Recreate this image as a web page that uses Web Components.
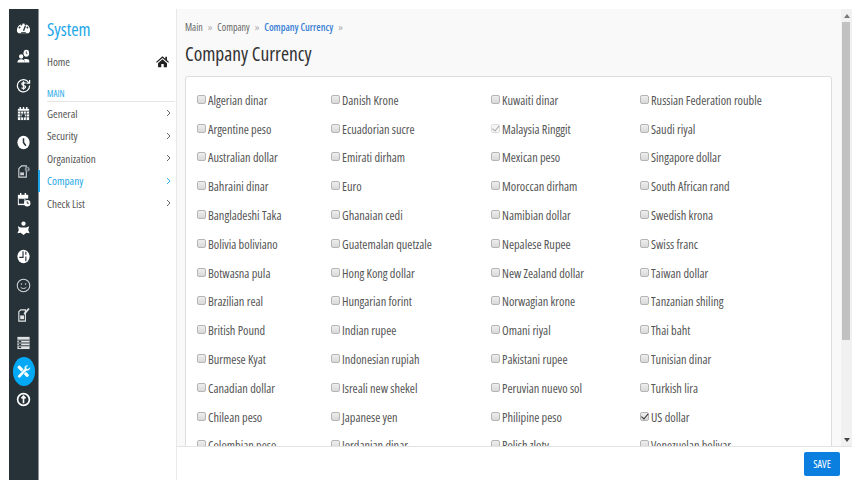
<!DOCTYPE html>
<html><head><meta charset="utf-8">
<style>
html,body{margin:0;padding:0;background:#fff;height:100%;overflow:hidden}
body{font-family:"Open Sans","Noto Sans",sans-serif;font-stretch:75%;color:#444}
</style></head><body>
<app-shell></app-shell>
<script>
const ICONS=[
'<path d="M1.200 12.500A7 7 0 1 1 14.800 12.500l-1.300 1.500h-11z" fill="#fff"/><circle cx="3.800" cy="8" r="1" fill="#263238"/><circle cx="5.800" cy="4.800" r="1" fill="#263238"/><circle cx="10.200" cy="4.800" r="1" fill="#263238"/><circle cx="12.200" cy="8" r="1" fill="#263238"/><path d="M8 11.500L10 6.500" stroke="#263238" stroke-width="1.400"/><path d="M5.500 14v-1h5v1z" fill="#263238"/>',
'<circle cx="5.500" cy="8" r="2.300" fill="#fff"/><path d="M1.500 14.500c0-2.500 1.700-3.500 4-3.500s4 1 4 3.500z" fill="#fff"/><ellipse cx="11" cy="4.500" rx="3" ry="3.700" fill="#fff"/><path d="M11 2.500v2.500h1.300" stroke="#263238" stroke-width=".8" fill="none"/><path d="M9.500 14.500c0-2-1-3-1-3.500 1-.5 4-.8 5 .3.600.8.800 2 .8 3.200z" fill="#fff"/>',
'<path d="M13.600 5A6.500 6.500 0 1 0 14.500 8" fill="none" stroke="#fff" stroke-width="1.300"/><path d="M14.500 2v3.400h-3.400" fill="none" stroke="#fff" stroke-width="1.300"/><path d="M10.200 5.600C9 4.700 6.200 4.600 6.200 6.500c0 2.300 4 1.100 4 3.200 0 1.800-3 1.800-4.400.8M8 3.500v9" fill="none" stroke="#fff" stroke-width="1.300"/>',
'<path d="M2 3h12v12H2z" fill="#fff"/><path d="M4.500 1v3M8 1v3M11.500 1v3" stroke="#fff" stroke-width="1.500"/><path d="M2 5.500h12M2 8.500h12M2 11.500h12M5 5.500V15M8 5.500V15M11 5.500V15" stroke="#263238" stroke-width=".8"/><rect x="6" y="9" width="3.500" height="3" fill="#263238"/>',
'<ellipse cx="8" cy="8" rx="6.500" ry="7.200" fill="#fff"/><path d="M8 3.500V8l2.500 3.500" fill="none" stroke="#263238" stroke-width="1.600"/>',
'<path d="M3 5l3-3h5v12H3z" fill="none" stroke="#cfd2d4" stroke-width="1.200"/><rect x="4.500" y="9" width="4" height="3" fill="#cfd2d4"/><circle cx="12" cy="5.500" r="2.600" fill="#8f979b"/><path d="M12 4v3" stroke="#263238"/>',
'<path d="M2 3h11v4H2z" fill="#fff"/><path d="M2 7h8v7H2z" fill="#fff"/><path d="M3 7.500h6v5H3z" fill="#263238"/><path d="M5 1v3M10 1v3" stroke="#fff" stroke-width="1.500"/><circle cx="12" cy="12" r="3.400" fill="#fff"/><path d="M12 10v2h1.700" fill="none" stroke="#263238"/>',
'<circle cx="8" cy="2.800" r="2.300" fill="#fff"/><path d="M2 5.500l3 1.300h6l3-1.300-1 4 1.500 3.500-3.500-.5-3 2.500-3-2.500-3.500.5L3 9.500z" fill="#fff"/>',
'<ellipse cx="8" cy="8" rx="6.500" ry="7.200" fill="#fff"/><path d="M7.500 2.500V9H3.500" fill="none" stroke="#263238" stroke-width="1.200"/><path d="M10.500 8v5M10.500 3v3" stroke="#263238" stroke-width="1.200"/>',
'<circle cx="8" cy="8" r="6.700" fill="none" stroke="#d5d8da" stroke-width="1.100"/><circle cx="5.800" cy="6.500" r=".8" fill="#d5d8da"/><circle cx="10.200" cy="6.500" r=".8" fill="#d5d8da"/><path d="M5 10c1.500 1.600 4.500 1.600 6 0" fill="none" stroke="#d5d8da"/>',
'<path d="M3 5l2-2h5v12H3z" fill="none" stroke="#e4e6e7" stroke-width="1.200"/><rect x="4.500" y="9" width="4" height="4" fill="#e4e6e7"/><path d="M8 7l5-6 1.500 1.200-5 6z" fill="#e4e6e7"/>',
'<rect x="1.500" y="2" width="13" height="13" fill="#dfe1e2"/><path d="M1.500 5.500h13M1.500 8.500h13M1.500 11.500h13" stroke="#263238"/><rect x="3" y="6.300" width="2.500" height="1.400" fill="#263238"/><rect x="3" y="9.300" width="2.500" height="1.400" fill="#263238"/><rect x="3" y="12.500" width="2.500" height="1.400" fill="#263238"/>',
'<path d="M2.200 2.200l1.800-.6 9.200 9.200a1.600 1.600 0 0 1-2.400 2.400L1.600 4z" fill="#fff"/><path d="M8.800 5.400a3.600 3.600 0 0 1 4.600-4.200l-2.200 2.200.3 1.400 1.400.3 2.200-2.200a3.600 3.600 0 0 1-4.200 4.600l-6.200 6.800a1.600 1.600 0 0 1-2.400-2.400z" fill="#fff" stroke="#03a9f4" stroke-width=".7"/>',
'<circle cx="8" cy="8" r="6.300" fill="none" stroke="#fff" stroke-width="1.800"/><path d="M8 4.500v7.500M5.800 6.800L8 4.500l2.200 2.300" fill="none" stroke="#fff" stroke-width="1.700"/>'
];
const COLS=[
["Algerian dinar","Argentine peso","Australian dollar","Bahraini dinar","Bangladeshi Taka","Bolivia boliviano","Botwasna pula","Brazilian real","British Pound","Burmese Kyat","Canadian dollar","Chilean peso","Colombian peso"],
["Danish Krone","Ecuadorian sucre","Emirati dirham","Euro","Ghanaian cedi","Guatemalan quetzale","Hong Kong dollar","Hungarian forint","Indian rupee","Indonesian rupiah","Isreali new shekel","Japanese yen","Jordanian dinar"],
["Kuwaiti dinar","Malaysia Ringgit","Mexican peso","Moroccan dirham","Namibian dollar","Nepalese Rupee","New Zealand dollar","Norwagian krone","Omani riyal","Pakistani rupee","Peruvian nuevo sol","Philipine peso","Polish zloty"],
["Russian Federation rouble","Saudi riyal","Singapore dollar","South African rand","Swedish krona","Swiss franc","Taiwan dollar","Tanzanian shiling","Thai baht","Tunisian dinar","Turkish lira","US dollar","Venezuelan bolivar"]];
function def(name,css,html){customElements.define(name,class extends HTMLElement{constructor(){super();this.attachShadow({mode:'open'}).innerHTML='<style>'+css+'</style>'+(typeof html==='function'?html(this):html);}})}
def('icon-rail',`:host{display:flex;flex-direction:column;align-items:center;width:30px;background:#263238;padding-top:4.700px;box-sizing:border-box;flex:none;border-right:1px solid #8a9297}
.i{height:28.620px;width:30px;display:flex;align-items:center;justify-content:center;flex:none}
.i svg{width:15px;height:15px}
.on{width:22px;height:28.620px;background:#03a9f4;border-radius:50%}`,
()=>ICONS.map((s,i)=>`<div class="i${i==12?' on':''}"><svg viewBox="0 0 16 16">${s}</svg></div>`).join(''));
def('side-item',`:host{display:flex;align-items:center;justify-content:space-between;height:22.500px;padding:0 5px 0 8px;font-size:11.200px;color:#555;position:relative;box-sizing:border-box}
:host([active]){color:#1ea7e8}
:host([active])::before{content:"";position:absolute;left:-1px;top:0;bottom:0;width:2px;background:#1ea7e8}
svg{width:5px;height:8px}`,
`<slot></slot><svg viewBox="0 0 5 8"><path d="M1 1l3 3-3 3" fill="none" stroke="currentColor" stroke-width=".9"/></svg>`);
def('side-nav',`:host{display:flex;flex-direction:column;width:138px;background:#fff;flex:none;box-sizing:border-box;border-right:1px solid #e9e9e9}
.t{font-size:17.800px;color:#1ea7e8;padding:9px 8px 0;line-height:22px}
.h{display:flex;justify-content:space-between;align-items:center;padding:0 7px 0 8px;height:20px;margin-top:11px;font-size:11.200px;color:#555}
.h svg{width:13px;height:13px}
.m{font-size:9px;color:#1ea7e8;padding:0 8px;margin-top:17px;line-height:11px;height:13px}
.l{height:1px;background:#e5e5e5;margin:0 1px 0 8px}`,
`<div class="t">System</div>
<div class="h"><span>Home</span><svg viewBox="0 0 16 16"><path d="M8 1.500L0 8.500l1 1.100L8 3.700l7 5.900 1-1.100-2.500-2.200V2h-2v2.600z" fill="#222"/><path d="M2.500 10L8 5.300l5.500 4.700v5H9.500v-4h-3v4h-4z" fill="#222"/></svg></div>
<div class="m">MAIN</div><div class="l"></div>
<div class="g"><side-item>General</side-item><side-item>Security</side-item><side-item>Organization</side-item><side-item active>Company</side-item><side-item>Check List</side-item></div>`);
def('crumb-bar',`:host{display:flex;align-items:center;font-size:10px;color:#666;height:14px}
b{font-weight:600;color:#3a7fd5}i{font-style:normal;color:#aaa;margin:0 5px;font-size:10px}`,
`<span>Main</span><i>»</i><span>Company</span><i>»</i><b>Company Currency</b><i>»</i>`);
def('cur-check',`:host{display:flex;align-items:center;height:28.800px;font-size:12.300px;color:#555;white-space:nowrap}
.b{width:7px;height:7px;border:1px solid #b5b5b5;border-radius:2px;background:linear-gradient(#eee,#d9d9d9);margin-right:2px;margin-top:-2px;flex:none;position:relative}
:host([checked]) .b::after,:host([dim]) .b::after{content:"";position:absolute;left:2px;top:-1px;width:2.500px;height:5.500px;border:solid #333;border-width:0 1.500px 1.500px 0;transform:rotate(40deg)}
:host([dim]) .b{background:#f5f5f5;border-color:#ddd}
:host([dim]) .b::after{border-color:#aaa}`,
`<span class="b"></span><slot></slot>`);
def('cur-col',`:host{display:flex;flex-direction:column}`,`<slot></slot>`);
def('cur-card',`:host{display:grid;grid-template-columns:134px 160px 149px 1fr;background:#fff;border:1px solid #ddd;border-radius:3px;padding:9px 0 0 11px;margin-top:10px;box-sizing:border-box;width:647px;height:420px}`,`<slot></slot>`);
def('scroll-bar',`:host{display:flex;flex-direction:column;width:11px;background:#f1f1f1;flex:none;box-sizing:border-box;align-self:stretch}
.a{height:13px;display:flex;align-items:center;justify-content:center;flex:none}
.a i{border:3px solid transparent;border-bottom:4px solid #777;border-top:0;width:0;height:0}
.d i{border-bottom:0;border-top:4px solid #444}
.t{height:318px;background:#c1c1c1;margin:0 2px 0 1px;flex:none}.s{flex:1}`,
`<div class="a"><i></i></div><div class="t"></div><div class="s"></div><div class="a d"><i></i></div>`);
def('content-area',`:host{display:flex;flex:1;min-width:0;background:#f9f9f9;overflow:hidden;height:437px}
.c{flex:1;min-width:0;padding:11px 0 0 8px;overflow:hidden}
h1{margin:8px 0 0;font-size:19.500px;font-weight:500;color:#333;line-height:24px}`,
`<div class="c"><crumb-bar></crumb-bar><h1>Company Currency</h1><slot></slot></div><scroll-bar></scroll-bar>`);
def('save-bar',`:host{display:flex;justify-content:flex-end;align-items:center;height:34px;background:#fff;border-top:1px solid #e3e3e3;box-sizing:border-box;padding-right:19px;margin-right:-7px}
button{border:0;background:#0b7fe0;color:#fff;font:500 10.500px "Open Sans",sans-serif;font-stretch:75%;width:36px;height:24px;border-radius:2px;padding:0;margin-top:1px}`,
`<button>SAVE</button>`);
def('app-shell',`:host{display:flex;height:471px;margin:9px 7px 0 9px;overflow:hidden}
.r{flex:1;min-width:0;display:flex;flex-direction:column}`,
`<icon-rail></icon-rail><side-nav></side-nav><div class="r"><content-area><cur-card id="c"></cur-card></content-area><save-bar></save-bar></div>`);
</script>
<script>
const shell=document.querySelector('app-shell');
const card=shell.shadowRoot.getElementById('c');
COLS.forEach(col=>{const c=document.createElement('cur-col');col.forEach(n=>{const x=document.createElement('cur-check');x.textContent=n;if(n==='US dollar')x.setAttribute('checked','');if(n==='Malaysia Ringgit')x.setAttribute('dim','');c.appendChild(x)});card.appendChild(c)});
</script>
</body></html>
